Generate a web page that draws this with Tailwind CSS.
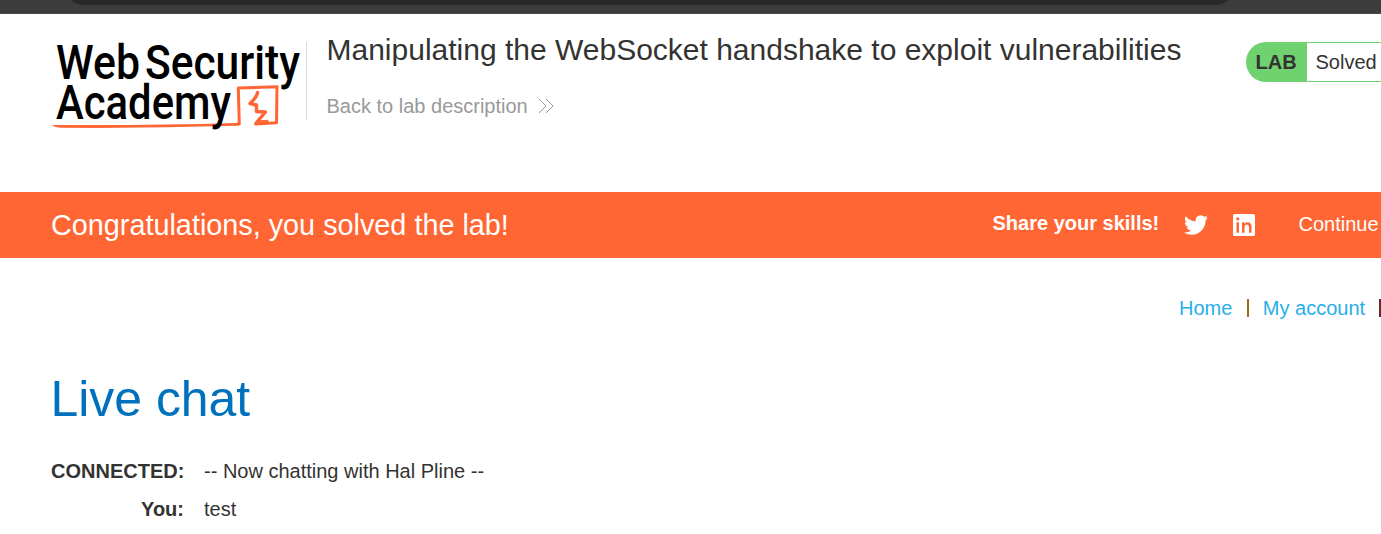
<!DOCTYPE html>
<html lang="en">
<head>
<meta charset="utf-8">
<title>Manipulating the WebSocket handshake to exploit vulnerabilities</title>
<script src="https://cdn.jsdelivr.net/npm/@tailwindcss/browser@4"></script>
</head>
<body class="h-[534px] w-[1381px] overflow-hidden whitespace-nowrap bg-white font-['Liberation_Sans',Arial,sans-serif] text-[20px] leading-6 text-[#333332]">
<div class="h-[14px] border-b border-[#464646] bg-[#3c3c3c] pl-[68px]">
  <svg class="block" width="1164" height="5" viewBox="0 0 1164 5"><path d="M3 0Q8 5 17 5H1146Q1155 5 1161 0Z" fill="#282828"/></svg>
</div>
<header class="flex h-[178px] items-start pl-[50px]">
  <svg class="mt-[22px] shrink-0" width="256" height="98" viewBox="50 36 256 98" role="img" aria-label="Web Security Academy">
    <path d="M52 125Q60 124.800 80 125Q160 125.200 236 123V125.800Q150 128.500 60 127.800Q54 127 52 125Z" fill="#ff6633"/>
    <path d="M235 124.500L239.300 124L238.300 88L277 86.800L276.500 122.800L255.500 124" fill="none" stroke="#ff6633" stroke-width="3" stroke-linejoin="round" stroke-linecap="round"/>
    <path d="M257.500 92.500Q257 97 250 103.500L256.500 105V111.500L265.500 112L256.500 122.500L267 121.500" fill="none" stroke="#ff6633" stroke-width="3.400" stroke-linejoin="round" stroke-linecap="round"/>
    <g fill="#000" font-family="Roboto, sans-serif" font-size="48" font-weight="500">
      <text x="56" y="78.500" textLength="84" lengthAdjust="spacingAndGlyphs">Web</text>
      <text x="145" y="78.500" textLength="155" lengthAdjust="spacingAndGlyphs">Security</text>
      <text x="56" y="119" textLength="175" lengthAdjust="spacingAndGlyphs">Academy</text>
    </g>
  </svg>
  <div class="mt-7 h-[78px] w-px shrink-0 bg-[#dddddd]"></div>
  <div class="ml-[19.500px] w-[919.500px] shrink-0 pt-[18px]">
    <h1 class="text-[30px] leading-9">Manipulating the WebSocket handshake to exploit vulnerabilities</h1>
    <a class="mt-[26px] flex items-center text-[#999999]"><span>Back to lab description</span>
      <svg class="ml-[10px]" width="16" height="16" viewBox="0 0 16 16" fill="none" stroke="#999999" stroke-width="1"><path d="M1 1L8 8L1 15M8 1L15 8L8 15"/></svg>
    </a>
  </div>
  <div class="mt-7 flex h-10 w-[180px] shrink-0 leading-10">
    <span class="w-[61px] shrink-0 rounded-l-[20px] bg-[#70d26e] pl-[9.500px] font-bold">LAB</span>
    <span class="grow border-y border-[#70d26e] pl-[8.500px] leading-[38px]">Solved</span>
  </div>
</header>
<section class="flex h-[66px] items-center bg-[#ff6633] pl-[51px] text-white">
  <h4 class="w-[941.500px] shrink-0 text-[28.800px]">Congratulations, you solved the lab!</h4>
  <span class="w-[191.500px] shrink-0 pb-1 font-bold">Share your skills!</span>
  <svg class="shrink-0" width="24" height="24" viewBox="0 0 24 24" fill="#fff"><path d="M23.950 4.570a10 10 0 01-2.820.770 4.960 4.960 0 002.160-2.720c-.950.550-2 .950-3.130 1.180a4.920 4.920 0 00-8.380 4.480C7.690 8.090 4.070 6.130 1.640 3.160a4.900 4.900 0 001.520 6.570 4.900 4.900 0 01-2.230-.610v.060a4.920 4.920 0 003.950 4.830 5 5 0 01-2.210.080 4.940 4.940 0 004.600 3.420A9.870 9.870 0 010 19.540a14 14 0 007.550 2.210c9.050 0 14-7.500 14-13.980 0-.210 0-.420-.020-.630a9.940 9.940 0 002.420-2.570z"/></svg>
  <svg class="ml-[25px] shrink-0" width="22" height="22" viewBox="0 0 22 22"><path fill="#fff" fill-rule="evenodd" d="M1.500 0H20.500Q22 0 22 1.500V20.500Q22 22 20.500 22H1.500Q0 22 0 20.500V1.500Q0 0 1.500 0ZM3.500 8.300V18.700H6V8.300ZM4.750 3.300A1.600 1.600 0 104.750 6.500A1.600 1.600 0 104.750 3.300ZM9 8.300V18.700H11.500V13.500C11.500 9.800 16 9.600 16 13.200V18.700H18.500V12.300C18.500 7.500 13.200 7.300 11.400 9.900V8.300Z"/></svg>
  <span class="ml-[43.500px] pb-[2px]">Continue</span>
</section>
<nav class="flex h-[90px] items-center pt-[10px] pl-[1179px] text-[#29aeea]">
  <a>Home</a><span class="mx-[14.250px] h-[18px] w-[2px] shrink-0 bg-[#a06a1c]"></span><a>My account</a><span class="ml-[13.500px] h-[18px] w-[2px] shrink-0 bg-[#6b2a2a]"></span>
</nav>
<main class="pl-[51px]">
  <h1 class="-ml-[0.500px] mt-[22px] text-[49.900px] leading-[58px] text-[#0071bc]">Live chat</h1>
  <div class="mt-[31px] grid grid-cols-[133px_1fr] gap-x-5 gap-y-[14px]">
    <b class="text-right">CONNECTED:</b><span>-- Now chatting with Hal Pline --</span>
    <b class="text-right">You:</b><span>test</span>
  </div>
</main>
</body>
</html>
